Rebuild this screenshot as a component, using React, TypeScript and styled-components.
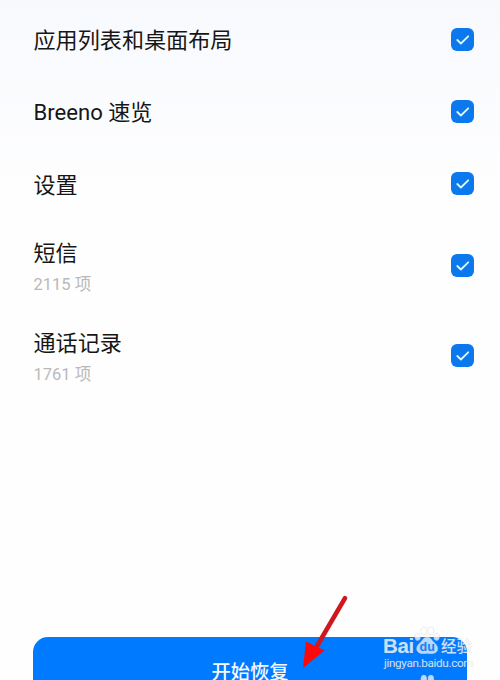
import React from 'react';
import styled, { createGlobalStyle } from 'styled-components';

const GlobalStyle = createGlobalStyle`
  html, body { margin: 0; padding: 0; background: #fefefe; overflow: hidden; }
  * { box-sizing: border-box; }
`;

const Screen = styled.main`
  position: relative;
  display: flex;
  flex-direction: column;
  width: 500px;
  height: 680px;
  overflow: hidden;
  padding-top: 3px;
  background: linear-gradient(#f8f9fd 0, #fbfcfe 110px, #fefefe 190px);
  font-family: Roboto, "Noto Sans CJK SC", sans-serif;
`;

const List = styled.div`
  display: flex;
  flex-direction: column;
  height: 634px;
  flex: none;
`;

const Row = styled.label<{ $height: number }>`
  display: flex;
  align-items: center;
  justify-content: space-between;
  height: ${(p) => p.$height}px;
  padding: 0 26px 0 33.5px;
`;

const Labels = styled.div`
  display: flex;
  flex-direction: column;
  padding-top: 2px;
`;

const Title = styled.span`
  font-size: 22.1px;
  line-height: 32px;
  color: #161616;
  white-space: nowrap;
`;

const Count = styled.span`
  font-size: 16.5px;
  line-height: 24px;
  margin-top: 4px;
  margin-bottom: -1px;
  color: #b9b9b9;
  white-space: nowrap;
`;

const Check = styled.span`
  display: flex;
  align-items: center;
  justify-content: center;
  width: 23px;
  height: 23px;
  border-radius: 6px;
  background: #0b78ee;
`;

const StartButton = styled.button`
  flex: none;
  width: 434px;
  height: 72px;
  margin: 0 33px;
  padding: 0;
  border: 0;
  border-radius: 15px;
  background: #007aff;
  color: #f3f9ff;
  font: 500 19.3px/72px Roboto, "Noto Sans CJK SC", sans-serif;
`;

const Arrow = styled.svg`
  position: absolute;
  left: 295px;
  top: 590px;
`;

const Watermark = styled.div`
  position: absolute;
  left: 383px;
  top: 625px;
  width: 100px;
  height: 55px;
  color: rgba(255, 255, 255, 0.76);
  text-shadow: 0 0 1px rgba(150, 150, 150, 0.4);
`;

const Brand = styled.div`
  display: flex;
  align-items: flex-end;
  height: 30px;
`;

const Latin = styled.span`
  width: 31px;
  font: 700 20.5px/18px "Liberation Sans", sans-serif;
  letter-spacing: -0.4px;
`;

const Chinese = styled.span`
  font: 500 15.5px/20px "Noto Sans CJK SC", sans-serif;
  white-space: nowrap;
`;

const Site = styled.div`
  font: 11.8px/16px Roboto, sans-serif;
  padding-left: 1px;
  letter-spacing: -0.38px;
  white-space: nowrap;
`;

const PawIcon = styled.svg`
  display: block;
  flex: none;
  margin-right: 1px;
`;

const LowerPaw = styled(PawIcon)`
  position: absolute;
  left: 31px;
  top: 49px;
`;

const PawShape = () => (
  <g fill="#fff" fillOpacity=".72" stroke="#bbb" strokeOpacity=".4" strokeWidth=".7">
    <ellipse cx="3.6" cy="11" rx="2.8" ry="3.6" transform="rotate(-10 3.6 11)" />
    <ellipse cx="9.8" cy="5" rx="3" ry="4" />
    <ellipse cx="16.9" cy="5" rx="3" ry="4" />
    <ellipse cx="22.7" cy="11" rx="2.8" ry="3.6" transform="rotate(10 22.7 11)" />
    <path d="M13.2 11c3.7 0 4.4 3.2 7 5.4 3.1 2.7 4.4 5.1 3.3 8.1-1.2 3.3-5.1 3.6-10.3 3.1-5.2.5-9.1.2-10.3-3.1-1.1-3 .2-5.4 3.3-8.1 2.6-2.2 3.3-5.4 7-5.4Z" />
  </g>
);

const items = [
  { title: '应用列表和桌面布局', height: 72 },
  { title: 'Breeno 速览', height: 72 },
  { title: '设置', height: 73 },
  { title: '短信', count: '2115 项', height: 90 },
  { title: '通话记录', count: '1761 项', height: 91 },
];

export default function App() {
  return (
    <>
      <GlobalStyle />
      <Screen>
        <List>
          {items.map((item) => (
            <Row key={item.title} $height={item.height}>
              <Labels>
                <Title>{item.title}</Title>
                {item.count && <Count>{item.count}</Count>}
              </Labels>
              <Check>
                <svg width="23" height="23" viewBox="0 0 23 23" fill="none">
                  <path d="m6.3 12 3.6 3.5 7.3-7.2" stroke="#dcfaff" strokeWidth="1.8" strokeLinecap="round" strokeLinejoin="round" />
                </svg>
              </Check>
            </Row>
          ))}
        </List>
        <StartButton>开始恢复</StartButton>
        <Arrow width="56" height="84" viewBox="0 0 56 84">
          <path d="M50 8.2 22 56" stroke="#cf171e" strokeWidth="4.6" strokeLinecap="round" />
          <path d="M8 78 11 51.5 29.5 60.5Z" fill="#f90909" />
        </Arrow>
        <Watermark>
          <Brand>
            <Latin>Bai</Latin>
            <PawIcon width="26" height="29" viewBox="0 0 26 29">
              <PawShape />
              <text x="5.5" y="25" fill="#1683f8" fontFamily="Liberation Sans" fontSize="12.5" fontWeight="700">du</text>
            </PawIcon>
            <Chinese>经验</Chinese>
          </Brand>
          <Site>jingyan.baidu.com</Site>
          <LowerPaw width="26" height="29" viewBox="0 0 26 29">
            <PawShape />
          </LowerPaw>
        </Watermark>
      </Screen>
    </>
  );
}
